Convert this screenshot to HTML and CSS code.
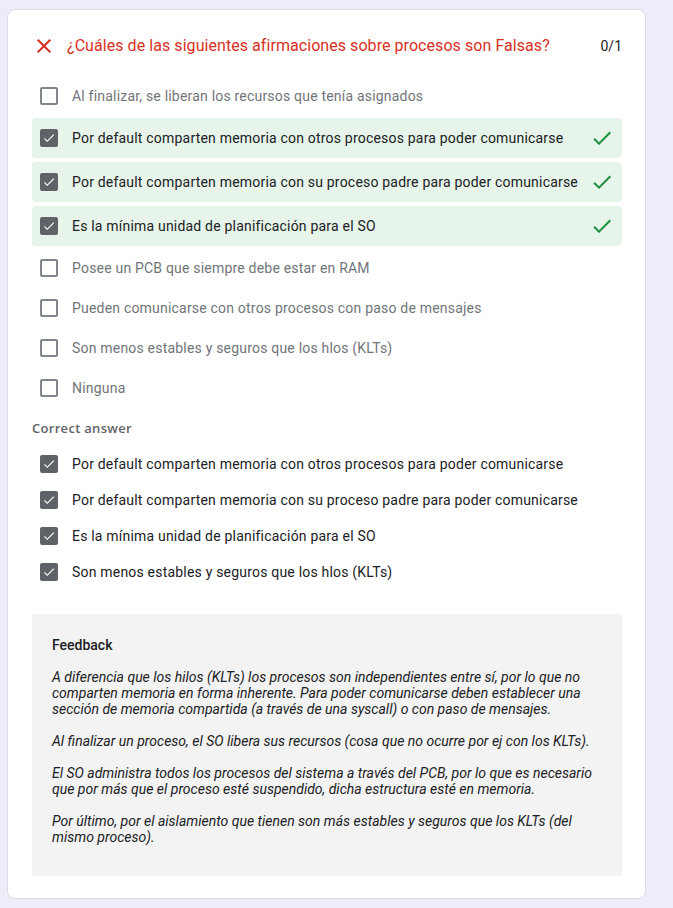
FILE: index.html
```html
<!DOCTYPE html>
<html lang="es">
<head>
<meta charset="utf-8">
<link rel="stylesheet" href="styles.css">
</head>
<body>
<div class="card">
  <div class="title-row">
    <svg class="x-icon" viewBox="0 0 24 24" width="24" height="24"><path d="M19 6.41L17.590 5 12 10.59 6.41 5 5 6.41 10.59 12 5 17.59 6.41 19 12 13.41 17.59 19 19 17.59 13.41 12z" fill="#d93025"/></svg>
    <div class="title">¿Cuáles de las siguientes afirmaciones sobre procesos son Falsas?</div>
    <div class="score">0/1</div>
  </div>

  <div class="options">
    <div class="opt"><span class="cb"></span><span class="label muted">Al finalizar, se liberan los recursos que tenía asignados</span></div>
    <div class="opt correct"><span class="cb checked"><svg viewBox="0 0 24 24"><path d="M9 16.17L4.83 12l-1.42 1.41L9 19 21 7l-1.41-1.41z" fill="#fff"/></svg></span><span class="label">Por default comparten memoria con otros procesos para poder comunicarse</span><svg class="ok" viewBox="0 0 24 24" width="24" height="24"><path d="M9 16.17L4.83 12l-1.42 1.41L9 19 21 7l-1.41-1.41z" fill="#1e8e3e"/></svg></div>
    <div class="opt correct"><span class="cb checked"><svg viewBox="0 0 24 24"><path d="M9 16.17L4.83 12l-1.42 1.41L9 19 21 7l-1.41-1.41z" fill="#fff"/></svg></span><span class="label">Por default comparten memoria con su proceso padre para poder comunicarse</span><svg class="ok" viewBox="0 0 24 24" width="24" height="24"><path d="M9 16.17L4.83 12l-1.42 1.41L9 19 21 7l-1.41-1.41z" fill="#1e8e3e"/></svg></div>
    <div class="opt correct"><span class="cb checked"><svg viewBox="0 0 24 24"><path d="M9 16.17L4.83 12l-1.42 1.41L9 19 21 7l-1.41-1.41z" fill="#fff"/></svg></span><span class="label">Es la mínima unidad de planificación para el SO</span><svg class="ok" viewBox="0 0 24 24" width="24" height="24"><path d="M9 16.17L4.83 12l-1.42 1.41L9 19 21 7l-1.41-1.41z" fill="#1e8e3e"/></svg></div>
    <div class="opt"><span class="cb"></span><span class="label muted">Posee un PCB que siempre debe estar en RAM</span></div>
    <div class="opt"><span class="cb"></span><span class="label muted">Pueden comunicarse con otros procesos con paso de mensajes</span></div>
    <div class="opt"><span class="cb"></span><span class="label muted">Son menos estables y seguros que los hlos (KLTs)</span></div>
    <div class="opt"><span class="cb"></span><span class="label muted">Ninguna</span></div>
  </div>

  <div class="section-label">Correct answer</div>

  <div class="answers">
    <div class="ans"><span class="cb checked"><svg viewBox="0 0 24 24"><path d="M9 16.17L4.83 12l-1.42 1.41L9 19 21 7l-1.41-1.41z" fill="#fff"/></svg></span><span class="label">Por default comparten memoria con otros procesos para poder comunicarse</span></div>
    <div class="ans"><span class="cb checked"><svg viewBox="0 0 24 24"><path d="M9 16.17L4.83 12l-1.42 1.41L9 19 21 7l-1.41-1.41z" fill="#fff"/></svg></span><span class="label">Por default comparten memoria con su proceso padre para poder comunicarse</span></div>
    <div class="ans"><span class="cb checked"><svg viewBox="0 0 24 24"><path d="M9 16.17L4.83 12l-1.42 1.41L9 19 21 7l-1.41-1.41z" fill="#fff"/></svg></span><span class="label">Es la mínima unidad de planificación para el SO</span></div>
    <div class="ans"><span class="cb checked"><svg viewBox="0 0 24 24"><path d="M9 16.17L4.83 12l-1.42 1.41L9 19 21 7l-1.41-1.41z" fill="#fff"/></svg></span><span class="label">Son menos estables y seguros que los hlos (KLTs)</span></div>
  </div>

  <div class="feedback">
    <div class="fb-title">Feedback</div>
    <div class="fb-text">
      <p>A diferencia que los hilos (KLTs) los procesos son independientes entre sí, por lo que no comparten memoria en forma inherente. Para poder comunicarse deben establecer una sección de memoria compartida (a través de una syscall) o con paso de mensajes.</p>
      <p>Al finalizar un proceso, el SO libera sus recursos (cosa que no ocurre por ej con los KLTs).</p>
      <p>El SO administra todos los procesos del sistema a través del PCB, por lo que es necesario que por más que el proceso esté suspendido, dicha estructura esté en memoria.</p>
      <p>Por último, por el aislamiento que tienen son más estables y seguros que los KLTs (del mismo proceso).</p>
    </div>
  </div>
</div>
</body>
</html>
```

FILE: styles.css
```css
* { box-sizing: border-box; }
html, body { margin: 0; padding: 0; }
body {
  background: #f0ebf8;
  font-family: Roboto, "Liberation Sans", sans-serif;
  color: #202124;
  padding: 9px 0 9px 7px;
}
.card {
  width: 639px;
  height: 890px;
  background: #fff;
  border: 1px solid #dadce0;
  border-radius: 8px;
  padding: 24px 23px 22px 24px;
  display: flex;
  flex-direction: column;
}
.title-row {
  display: flex;
  align-items: center;
  height: 24px;
}
.x-icon { flex: none; width: 24px; height: 24px; }
.title {
  flex: 1;
  margin-left: 11px;
  color: #d93025;
  font-size: 16px;
  line-height: 24px;
  letter-spacing: 0.06px;
}
.score {
  font-size: 14px;
  line-height: 24px;
  color: #202124;
}
.options {
  margin-top: 18px;
  display: flex;
  flex-direction: column;
}
.opt {
  height: 40px;
  display: flex;
  align-items: center;
  padding: 0 8px;
  border-radius: 4px;
}
.opt.correct {
  background: #e6f4ea;
  margin: 2px 0;
}
.cb {
  flex: none;
  width: 18px;
  height: 18px;
  border: 2px solid #80868b;
  border-radius: 2px;
  display: flex;
  align-items: center;
  justify-content: center;
}
.cb.checked {
  background: #5f6368;
  border-color: #5f6368;
}
.cb svg { width: 16px; height: 16px; }
.label {
  flex: 1;
  margin-left: 14px;
  font-size: 14px;
  line-height: 20px;
  letter-spacing: 0.2px;
  color: #202124;
}
.label.muted { color: #70757a; }
.ok { flex: none; width: 24px; height: 24px; }
.section-label {
  margin-top: 10px;
  font-family: "Open Sans", Roboto, sans-serif;
  font-size: 13px;
  line-height: 20px;
  font-weight: 600;
  letter-spacing: 0.3px;
  color: #5f6368;
}
.answers {
  margin-top: 8px;
  display: flex;
  flex-direction: column;
}
.ans {
  height: 36px;
  display: flex;
  align-items: center;
  padding: 0 8px;
}
.feedback {
  margin-top: 24px;
  background: #f3f3f3;
  padding: 21px 20px 31px 20px;
}
.fb-title {
  font-size: 14px;
  font-weight: 500;
  line-height: 20px;
  color: #202124;
}
.fb-text {
  margin-top: 14px;
  font-size: 14px;
  line-height: 16px;
  font-style: italic;
  color: #202124;
}
.fb-text p { margin: 0 0 16px 0; }
.fb-text p:last-child { margin-bottom: 0; }
```
